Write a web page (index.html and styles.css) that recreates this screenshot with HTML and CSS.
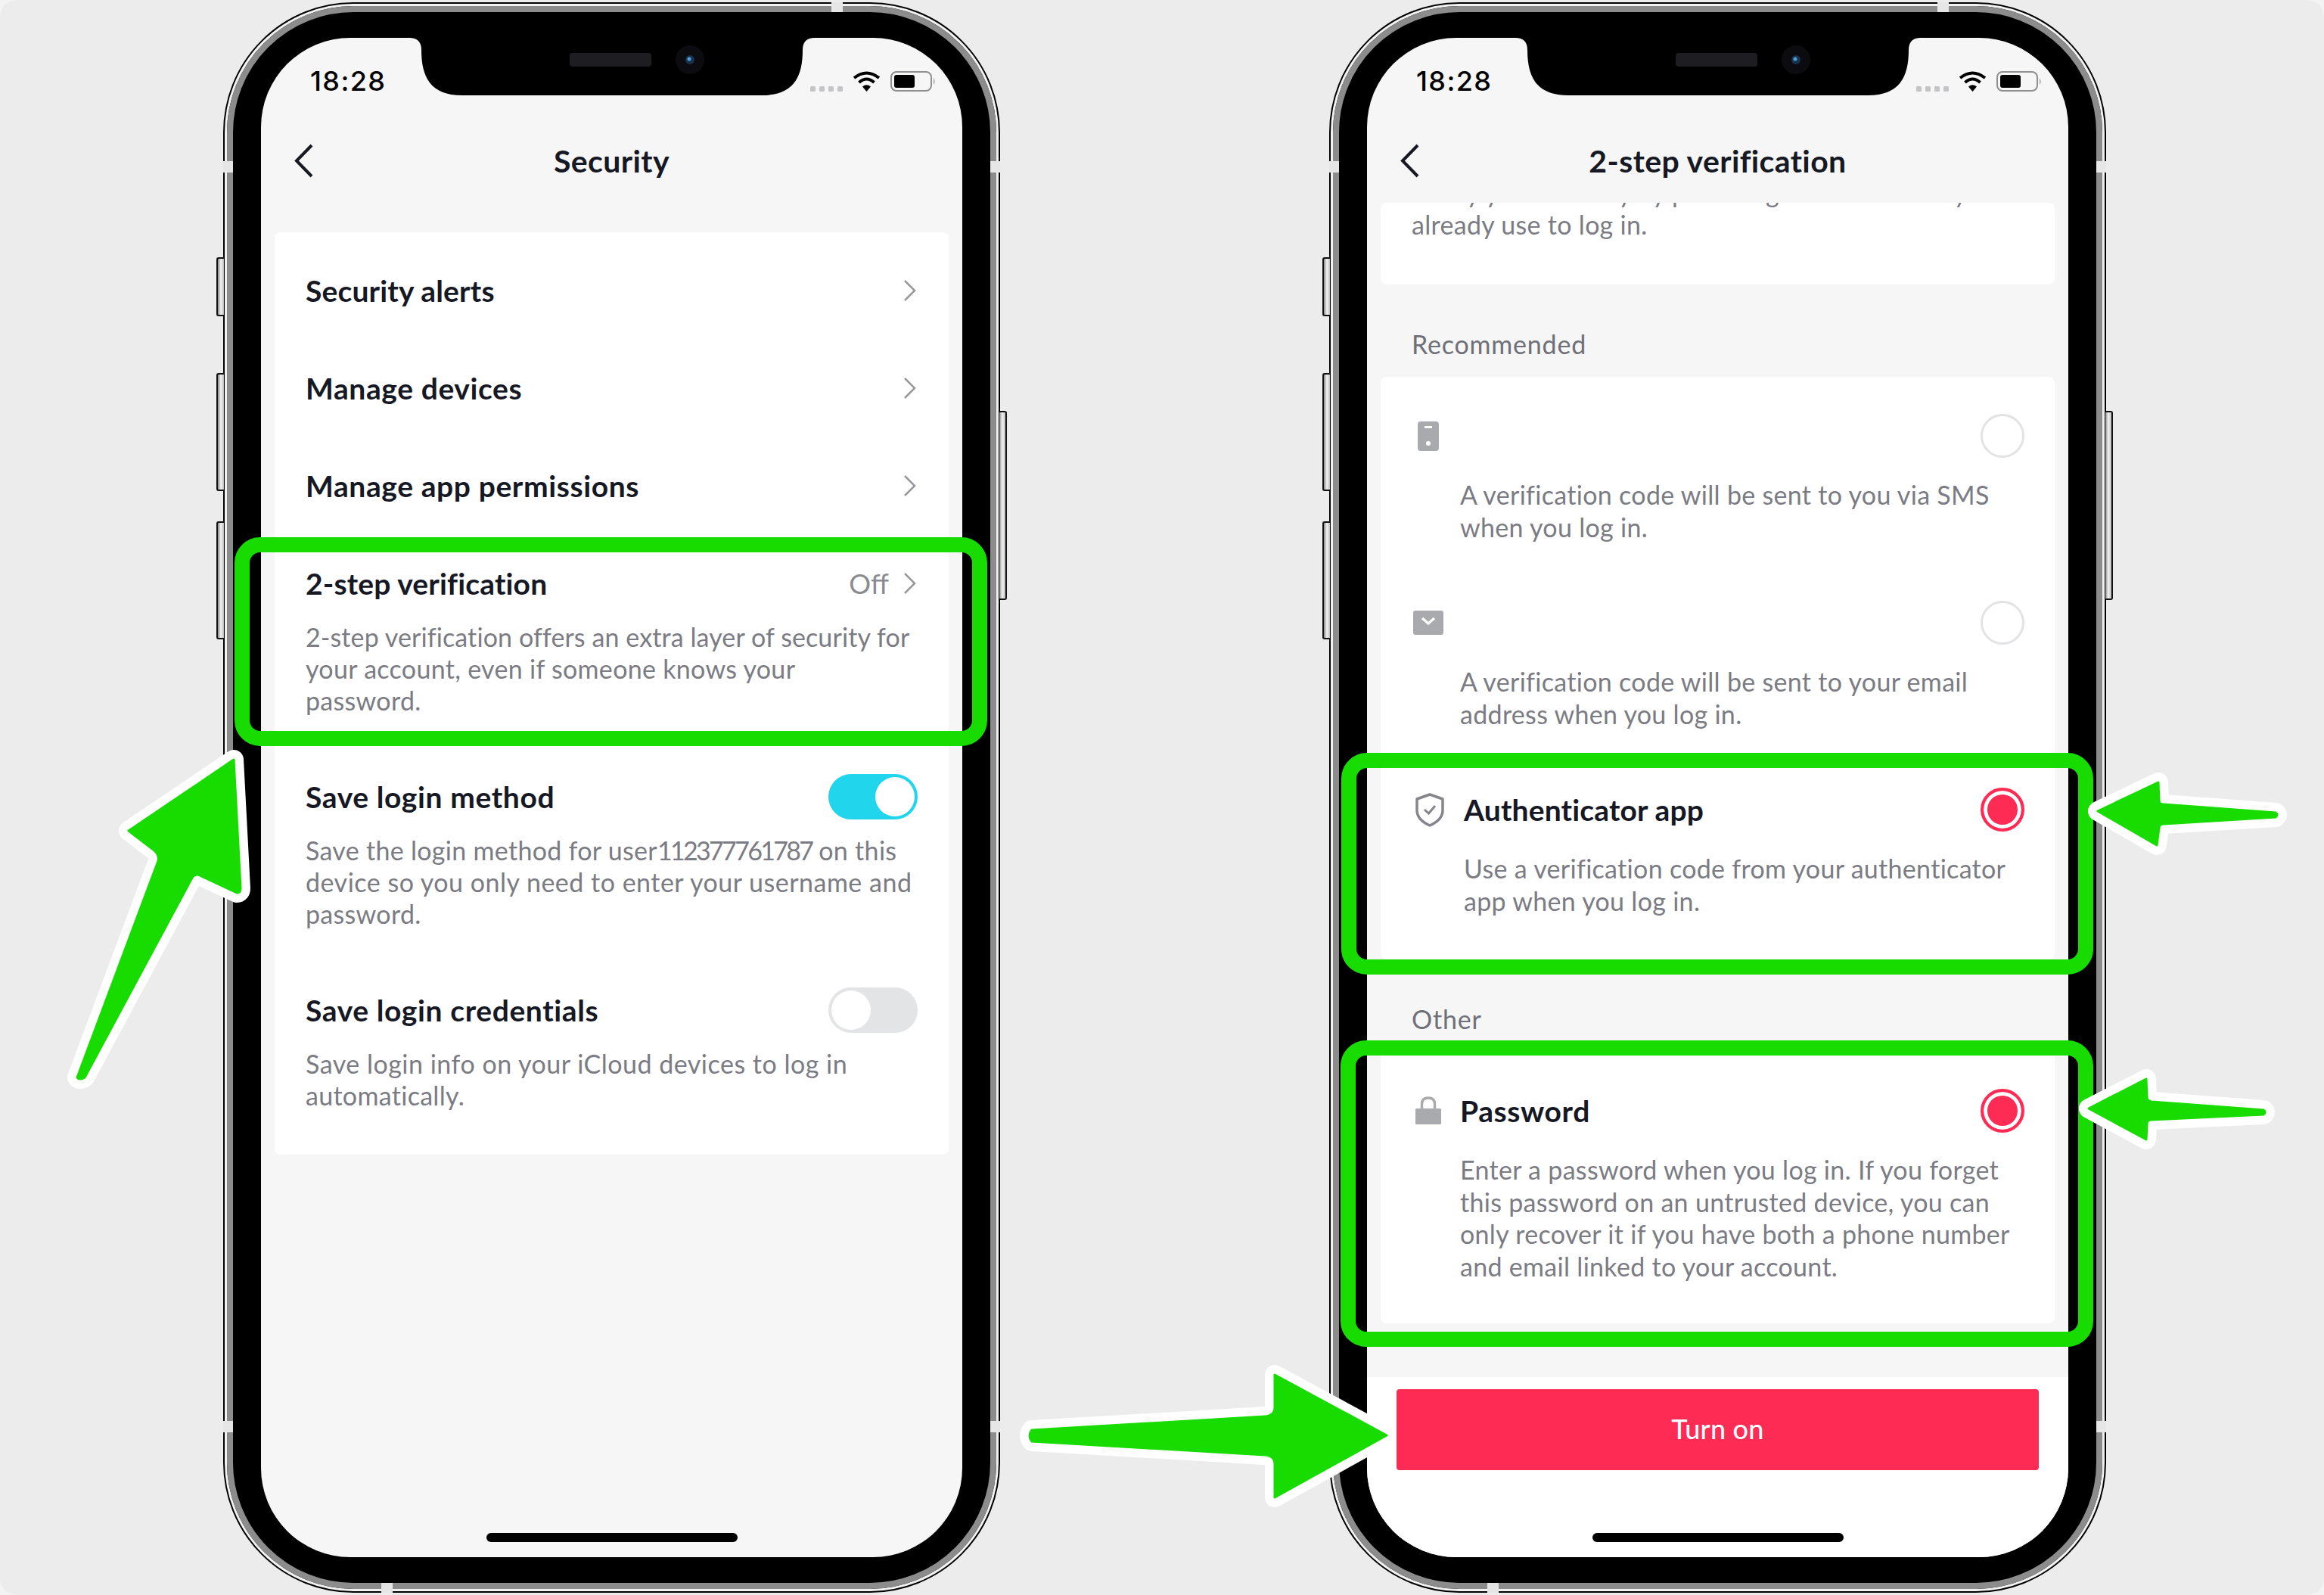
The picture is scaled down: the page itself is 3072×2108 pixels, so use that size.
FILE: index.html
```html
<!DOCTYPE html>
<html lang="en">
<head>
<meta charset="utf-8">
<title>TikTok 2-step verification</title>
<link rel="stylesheet" href="styles.css">
</head>
<body>
<div class="stage">

  <section class="phone">
    <i class="side side-silent"></i><i class="side side-up"></i><i class="side side-down"></i><i class="side side-power"></i>
    <div class="rim"><div class="bezel">
      <i class="band band-tl"></i><i class="band band-tr"></i><i class="band band-bl"></i><i class="band band-br"></i><i class="band band-t"></i><i class="band band-b"></i>
      <div class="screen">
        <svg class="notch" viewBox="0 0 928 76" width="928" height="76"><path d="M196 0Q212 0 212 16C212 52 224 76 266 76L662 76C704 76 716 52 716 16Q716 0 732 0Z" fill="#000"/><rect x="408" y="20" width="108" height="18" rx="4" fill="#1e1e22"/><circle cx="567" cy="29" r="19" fill="#0c0c10"/><circle cx="567" cy="29" r="6" fill="#17324a"/><circle cx="566" cy="28" r="2.5" fill="#4f9fd8"/></svg>
        <header class="status">
          <span class="time">18:28</span>
          <div class="indicators">
            <svg width="43" height="27" viewBox="0 0 43 27"><g fill="#c4c4c6"><rect x="0" y="20" width="7" height="7" rx="1.5"/><rect x="12" y="20" width="7" height="7" rx="1.5"/><rect x="24" y="20" width="7" height="7" rx="1.5"/><rect x="36" y="20" width="7" height="7" rx="1.5"/></g></svg>
            <svg width="37" height="27" viewBox="0 0 37 27"><g fill="none" stroke="#000" stroke-width="4"><path d="M2 9Q18.500 -4 35 9"/><path d="M8.500 15Q18.500 6 28.500 15"/></g><path d="M13 20.500Q18.500 16 24 20.500L18.500 27Z"/></svg>
            <svg width="60" height="27" viewBox="0 0 60 27"><rect x="1" y="1" width="53" height="25" rx="7" fill="none" stroke="#8f8f92" stroke-width="2"/><rect x="5" y="5" width="27" height="17" rx="3"/><path d="M57 9Q60 13.500 57 18Z" fill="#9a9a9c"/></svg>
          </div>
        </header>
        <nav class="nav">
          <svg class="back" width="27" height="45" viewBox="0 0 27 45"><path d="M24 2L4 22.500L24 43" fill="none" stroke="#161823" stroke-width="4"/></svg>
          <h1 class="nav-title">Security</h1>
        </nav>
        <main class="main main-settings">
          <div class="card card-settings">
            <div class="row"><div class="row-head"><span class="row-title snug">Security alerts</span><svg class="chev" width="20" height="30" viewBox="0 0 20 30"><path d="M3 2L16 15L3 28" fill="none" stroke="#97989d" stroke-width="2.500"/></svg></div></div>
            <div class="row"><div class="row-head"><span class="row-title">Manage devices</span><svg class="chev" width="20" height="30" viewBox="0 0 20 30"><path d="M3 2L16 15L3 28" fill="none" stroke="#97989d" stroke-width="2.500"/></svg></div></div>
            <div class="row"><div class="row-head"><span class="row-title">Manage app permissions</span><svg class="chev" width="20" height="30" viewBox="0 0 20 30"><path d="M3 2L16 15L3 28" fill="none" stroke="#97989d" stroke-width="2.500"/></svg></div></div>
            <div class="row"><div class="row-head"><span class="row-title snug">2-step verification</span><span class="row-value">Off</span><svg class="chev" width="20" height="30" viewBox="0 0 20 30"><path d="M3 2L16 15L3 28" fill="none" stroke="#97989d" stroke-width="2.500"/></svg></div>
              <p class="desc"><span class="line-tight">2-step verification offers an extra layer of security for</span><br>your account, even if someone knows your<br>password.</p></div>
            <div class="row"><div class="row-head"><span class="row-title">Save login method</span><span class="toggle toggle-on"></span></div>
              <p class="desc">Save the login method for user<span class="digits">112377761787</span> on this<br><span class="line-loose">device so you only need to enter your username and</span><br>password.</p></div>
            <div class="row"><div class="row-head"><span class="row-title">Save login credentials</span><span class="toggle"></span></div>
              <p class="desc"><span class="line-loose">Save login info on your iCloud devices to log in</span><br>automatically.</p></div>
          </div>
        </main>
        <div class="home"></div>
      </div>
    </div></div>
  </section>

  <section class="phone">
    <i class="side side-silent"></i><i class="side side-up"></i><i class="side side-down"></i><i class="side side-power"></i>
    <div class="rim"><div class="bezel">
      <i class="band band-tl"></i><i class="band band-tr"></i><i class="band band-bl"></i><i class="band band-br"></i><i class="band band-t"></i><i class="band band-b"></i>
      <div class="screen">
        <svg class="notch" viewBox="0 0 928 76" width="928" height="76"><path d="M196 0Q212 0 212 16C212 52 224 76 266 76L662 76C704 76 716 52 716 16Q716 0 732 0Z" fill="#000"/><rect x="408" y="20" width="108" height="18" rx="4" fill="#1e1e22"/><circle cx="567" cy="29" r="19" fill="#0c0c10"/><circle cx="567" cy="29" r="6" fill="#17324a"/><circle cx="566" cy="28" r="2.5" fill="#4f9fd8"/></svg>
        <header class="status">
          <span class="time">18:28</span>
          <div class="indicators">
            <svg width="43" height="27" viewBox="0 0 43 27"><g fill="#c4c4c6"><rect x="0" y="20" width="7" height="7" rx="1.5"/><rect x="12" y="20" width="7" height="7" rx="1.5"/><rect x="24" y="20" width="7" height="7" rx="1.5"/><rect x="36" y="20" width="7" height="7" rx="1.5"/></g></svg>
            <svg width="37" height="27" viewBox="0 0 37 27"><g fill="none" stroke="#000" stroke-width="4"><path d="M2 9Q18.500 -4 35 9"/><path d="M8.500 15Q18.500 6 28.500 15"/></g><path d="M13 20.500Q18.500 16 24 20.500L18.500 27Z"/></svg>
            <svg width="60" height="27" viewBox="0 0 60 27"><rect x="1" y="1" width="53" height="25" rx="7" fill="none" stroke="#8f8f92" stroke-width="2"/><rect x="5" y="5" width="27" height="17" rx="3"/><path d="M57 9Q60 13.500 57 18Z" fill="#9a9a9c"/></svg>
          </div>
        </header>
        <nav class="nav">
          <svg class="back" width="27" height="45" viewBox="0 0 27 45"><path d="M24 2L4 22.500L24 43" fill="none" stroke="#161823" stroke-width="4"/></svg>
          <h1 class="nav-title">2-step verification</h1>
        </nav>
        <main class="main main-methods">
          <div class="card card-intro">
            <p class="desc">Verify your identity by providing a method that you<br>already use to log in.</p>
          </div>
          <h2 class="label">Recommended</h2>
          <div class="card card-recommended">
            <div class="option">
              <div class="option-head">
                <svg class="icon" width="44" height="40" viewBox="0 0 44 40"><rect x="8" y="1" width="28" height="39" rx="4" fill="#a9aaad"/><rect x="17" y="7" width="10" height="3" fill="#fff"/><circle cx="22" cy="30" r="3" fill="#fff"/></svg>
                <span class="radio"></span>
              </div>
              <p class="desc desc-option">A verification code will be sent to you via SMS<br>when you log in.</p>
            </div>
            <div class="option">
              <div class="option-head">
                <svg class="icon" width="44" height="40" viewBox="0 0 44 40"><rect x="2" y="4" width="40" height="32" rx="3" fill="#a9aaad"/><path d="M14 14L22 21L30 14" fill="none" stroke="#fff" stroke-width="3.500"/></svg>
                <span class="radio"></span>
              </div>
              <p class="desc desc-option">A verification code will be sent to your email<br>address when you log in.</p>
            </div>
            <div class="option">
              <div class="option-head">
                <svg class="icon" width="44" height="46" viewBox="0 0 44 46"><path d="M24 3L41 9V24C41 34 33 40 24 44C15 40 7 34 7 24V9Z" fill="none" stroke="#85868b" stroke-width="3.500" stroke-linejoin="round"/><path d="M17 23L22.500 28L31 18" fill="none" stroke="#85868b" stroke-width="3"/></svg>
                <span class="option-title option-title-wide snug">Authenticator app</span>
                <span class="radio radio-on"></span>
              </div>
              <p class="desc desc-option desc-wide">Use a verification code from your authenticator<br>app when you log in.</p>
            </div>
          </div>
          <h2 class="label">Other</h2>
          <div class="card card-password">
            <div class="option">
              <div class="option-head">
                <svg class="icon" width="44" height="38" viewBox="0 0 44 38"><path d="M13.500 18V10C13.500 4.500 17 2 22 2C27 2 30.500 4.500 30.500 10V18" fill="none" stroke="#a9aaad" stroke-width="3.500"/><rect x="5" y="16" width="34" height="21" rx="1.500" fill="#a9aaad"/></svg>
                <span class="option-title">Password</span>
                <span class="radio radio-on"></span>
              </div>
              <p class="desc desc-option">Enter a password when you log in. If you forget<br>this password on an untrusted device, you can<br>only recover it if you have both a phone number<br>and email linked to your account.</p>
            </div>
          </div>
        </main>
        <footer class="footer"><button class="primary" type="button">Turn on</button></footer>
        <div class="home"></div>
      </div>
    </div></div>
  </section>

  <div class="frame frame-a"></div>
  <div class="frame frame-b"></div>
  <div class="frame frame-c"></div>

  <svg class="arrows" width="3072" height="2108" viewBox="0 0 3072 2108">
    <g class="arrow-halo">
      <path id="a1" d="M309 1004L170 1098L204 1124Q211 1130 209 1138L102 1424Q105 1428 112 1424L254 1160Q258 1154 264 1157L313 1180Q318 1180 318 1174Z"/>
      <path id="a2" d="M2773 1072L2853 1034L2854 1058Q2854 1063 2860 1063L3008 1074Q3012 1077 3008 1080L2860 1089Q2854 1089 2854 1094L2851 1117Z"/>
      <path id="a3" d="M2761 1465L2837 1426L2838 1450Q2838 1455 2844 1456L2992 1467Q2996 1470 2992 1473L2844 1480Q2838 1480 2838 1485L2837 1506Z"/>
      <path id="a4" d="M1833 1897L1685 1817L1685 1860Q1685 1871 1672 1872L1364 1890Q1358 1897 1364 1905L1672 1923Q1685 1924 1685 1935L1685 1979Z"/>
    </g>
    <g class="arrow-fill">
      <use href="#a1"/><use href="#a2"/><use href="#a3"/><use href="#a4"/>
    </g>
  </svg>
</div>
</body>
</html>
```
FILE: styles.css
```css
* { box-sizing: border-box; }
html, body { margin: 0; padding: 0; }
body { width: 3072px; height: 2108px; background: #f3f3f3; overflow: hidden; font-family: "Lato", "Liberation Sans", sans-serif; color: #161823; }
.stage { position: relative; width: 3072px; height: 2108px; padding: 3px 0 0 295px; display: flex; gap: 435px; align-items: flex-start; background: #ececec; border-radius: 22px; }

/* device */
.phone { position: relative; flex: none; width: 1027px; height: 2102px; border: 2px solid #000; border-radius: 172px; background: #000; }
.rim { height: 100%; border: 3px solid #f2f2f2; border-radius: 170px; background: #000; }
.bezel { position: relative; height: 100%; padding: 34px 37px; border: 8px solid #8c8c8c; border-radius: 167px; background: #000; }
.screen { position: relative; width: 927px; height: 2008px; border-radius: 118px; background: #f6f6f6; overflow: hidden; display: flex; flex-direction: column; }
.side { position: absolute; left: -11px; width: 10px; border: 2px solid #111; border-right: 0; border-radius: 3px 0 0 3px; background: linear-gradient(90deg, #8a8a8a, #f4f4f4 50%, #bbb); }
.side-silent { top: 335px; height: 78px; }
.side-up { top: 488px; height: 156px; }
.side-down { top: 684px; height: 156px; }
.side-power { left: auto; right: -11px; top: 538px; height: 250px; border: 2px solid #111; border-left: 0; border-radius: 0 3px 3px 0; }
.band { position: absolute; background: #e6e6e6; }
.band-tl, .band-bl { left: -13px; width: 13px; height: 15px; }
.band-tr, .band-br { right: -13px; width: 13px; height: 15px; }
.band-tl, .band-tr { top: 197px; }
.band-bl, .band-br { top: 1862px; }
.band-t { top: -13px; right: 195px; width: 15px; height: 13px; }
.band-b { bottom: -13px; left: 196px; width: 15px; height: 13px; }
.notch { position: absolute; top: 0; left: 0; }

/* status + nav */
.status { flex: none; height: 114px; padding: 0 35px 0 65px; display: flex; justify-content: space-between; align-items: center; }
.time { position: relative; font-family: "Inter", sans-serif; font-size: 36px; font-weight: 500; letter-spacing: 1.4px; color: #000; }
.indicators { display: flex; align-items: center; gap: 13px; }
.indicators svg { display: block; }
.nav { flex: none; height: 104px; padding: 0 43px 8px; display: grid; grid-template-columns: 1fr auto 1fr; align-items: center; }
.back { display: block; }
.nav-title { margin: 0; font-size: 41px; font-weight: 700; line-height: 1; letter-spacing: .4px; color: #161823; }

/* content */
.main { flex: 1; min-height: 0; padding: 0 18px; overflow: hidden; }
.main-settings { padding-top: 39px; }
.card { background: #fff; border-radius: 8px; }
.card-settings { padding: 14px 0; }
.row { padding: 40px 41px 43px; }
.row-head { display: flex; align-items: center; height: 46px; }
.row-title { font-size: 39px; font-weight: 700; line-height: 46px; letter-spacing: .6px; color: #161823; white-space: nowrap; }
.row-value { margin-left: auto; margin-right: 18px; font-size: 36px; color: #8a8b91; }
.chev { display: block; margin-left: auto; }
.row-value + .chev { margin-left: 0; }
.desc { margin: 27px 0 0; font-size: 34px; line-height: 42px; letter-spacing: .3px; color: #7b7c83; white-space: nowrap; }
.digits { letter-spacing: -2.700px; }
.line-tight { letter-spacing: .1px; }
.line-loose { letter-spacing: .5px; }
.toggle { position: relative; margin-left: auto; width: 118px; height: 60px; border-radius: 30px; background: #e3e4e5; }
.toggle::after { content: ""; position: absolute; top: 4px; left: 4px; width: 52px; height: 52px; border-radius: 50%; background: #fff; }
.toggle-on { background: #20d5ec; }
.toggle-on::after { left: 62px; }

/* methods */
.card-intro { height: 108px; padding: 0 41px; overflow: hidden; }
.card-intro .desc { margin: -34px 0 0; }
.label { margin: 0; padding: 57px 41px 21px; font-size: 34px; font-weight: 400; line-height: 44px; letter-spacing: .8px; color: #6f7077; }
.option { padding: 49px 40px 27px 41px; }
.option-head { display: flex; align-items: center; height: 58px; }
.icon { display: block; flex: none; margin-right: 20px; }
.option-title { font-size: 39px; font-weight: 700; letter-spacing: .6px; color: #161823; white-space: nowrap; }
.option-title-wide { margin-left: 5px; }
.snug { letter-spacing: .15px; }
.radio { margin-left: auto; width: 58px; height: 58px; border: 3px solid #e3e3e5; border-radius: 50%; background: #fff; flex: none; }
.radio-on { border: 4px solid #fe2c55; box-shadow: inset 0 0 0 5px #fff; background: #fe2c55; }
.desc-option { margin: 28px 0 0 64px; line-height: 42.500px; }
.desc-wide { margin-left: 69px; }
.card-recommended { padding-bottom: 29px; }
.card-password { padding-bottom: 27px; }
.footer { flex: none; height: 238px; padding: 16px 39px 0; background: #fff; }
.primary { display: block; width: 100%; height: 107px; padding: 0 0 3px; border: 0; border-radius: 4px; background: #fe2c55; color: #fff; font-family: inherit; font-size: 36px; font-weight: 500; letter-spacing: .2px; }
.home { position: absolute; left: 298px; bottom: 20px; width: 332px; height: 12px; border-radius: 6px; background: #000; }

/* annotations */
.frame { position: absolute; border: 20px solid #18dc00; border-radius: 34px; }
.frame-a { left: 310px; top: 710px; width: 995px; height: 276px; }
.frame-b { left: 1773px; top: 995px; width: 994px; height: 293px; }
.frame-c { left: 1772px; top: 1375px; width: 995px; height: 405px; }
.arrows { position: absolute; top: 0; left: 0; pointer-events: none; }
.arrow-halo { fill: #fff; stroke: #fff; stroke-width: 26px; stroke-linejoin: round; }
.arrow-fill { fill: #18dc00; stroke: #18dc00; stroke-width: 3px; stroke-linejoin: round; }
```
